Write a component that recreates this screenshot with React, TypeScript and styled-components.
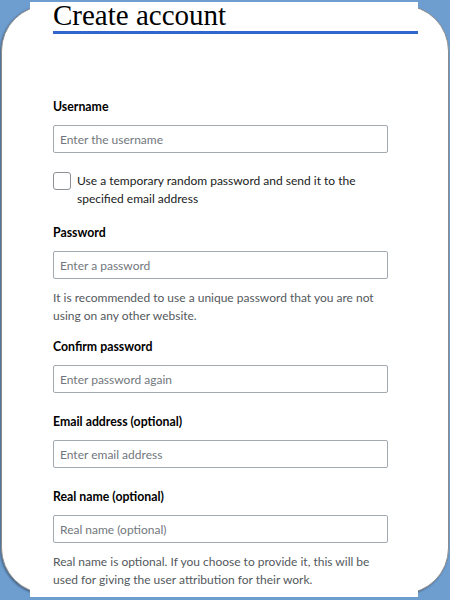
import React from 'react';
import styled, { createGlobalStyle } from 'styled-components';

const GlobalStyle = createGlobalStyle`
  html, body {
    margin: 0;
    padding: 0;
    background: #6e9dd0;
  }
  * {
    box-sizing: border-box;
  }
`;

const Screen = styled.div`
  height: 600px;
  width: 450px;
  padding: 5px 1px 6px 1px;
  overflow: hidden;
`;

const Card = styled.div`
  position: relative;
  height: 100%;
  background: #fff;
  border: 1px solid #8c8c8c;
  border-radius: 46px;
  box-shadow: -1px 1px 2px rgba(0, 0, 0, 0.35);
  padding: 0 31px 0 51px;

  &::before {
    content: '';
    position: absolute;
    top: -4px;
    bottom: -4px;
    left: 28px;
    right: 30px;
    background: #fff;
  }
`;

const Content = styled.div`
  position: relative;
  margin-top: -6px;
`;

const Title = styled.h1`
  margin: 0;
  font-family: 'Liberation Serif', 'Times New Roman', serif;
  font-weight: normal;
  font-size: 29px;
  line-height: 30px;
  color: #000;
  padding-bottom: 1px;
  border-bottom: 3px solid #3366cc;
  margin-right: -1px;
`;

const Form = styled.form`
  display: flex;
  flex-direction: column;
  padding-top: 64px;
  width: 335px;
  font-family: Lato, 'Noto Sans', sans-serif;
`;

const Field = styled.div<{ $gap?: number }>`
  display: flex;
  flex-direction: column;
  margin-bottom: ${(p) => p.$gap ?? 19}px;
`;

const Label = styled.label`
  font-size: 12.3px;
  font-weight: bold;
  line-height: 18px;
  color: #000;
  margin-bottom: 9px;
`;

const Input = styled.input`
  height: 28px;
  width: 100%;
  border: 1px solid #a2a9b1;
  border-radius: 2px;
  padding: 0 6px;
  font-family: inherit;
  font-size: 12px;
  color: #202122;
  background: #fff;

  &::placeholder {
    color: #72777d;
  }
`;

const Help = styled.p`
  margin: 10px 0 0;
  font-size: 12px;
  line-height: 18px;
  color: #54595d;
`;

const CheckRow = styled.label`
  display: flex;
  align-items: flex-start;
  gap: 6px;
  margin-bottom: 16px;
  font-size: 12px;
  line-height: 18px;
  color: #202122;
`;

const Box = styled.input`
  appearance: none;
  flex-shrink: 0;
  width: 18px;
  height: 18px;
  margin: 0;
  border: 1px solid #8d9196;
  border-radius: 3px;
  background: #fff;
`;

const App: React.FC = () => {
  return (
    <Screen>
      <GlobalStyle />
      <Card>
        <Content>
          <Title>Create account</Title>
          <Form>
            <Field>
              <Label>Username</Label>
              <Input placeholder="Enter the username" />
            </Field>
            <CheckRow>
              <Box type="checkbox" />
              <span>Use a temporary random password and send it to the specified email address</span>
            </CheckRow>
            <Field $gap={13}>
              <Label>Password</Label>
              <Input type="password" placeholder="Enter a password" />
              <Help>It is recommended to use a unique password that you are not using on any other website.</Help>
            </Field>
            <Field $gap={20}>
              <Label>Confirm password</Label>
              <Input type="password" placeholder="Enter password again" />
            </Field>
            <Field $gap={20}>
              <Label>Email address (optional)</Label>
              <Input placeholder="Enter email address" />
            </Field>
            <Field $gap={0}>
              <Label>Real name (optional)</Label>
              <Input placeholder="Real name (optional)" />
              <Help>Real name is optional. If you choose to provide it, this will be used for giving the user attribution for their work.</Help>
            </Field>
          </Form>
        </Content>
      </Card>
    </Screen>
  );
};

export default App;
